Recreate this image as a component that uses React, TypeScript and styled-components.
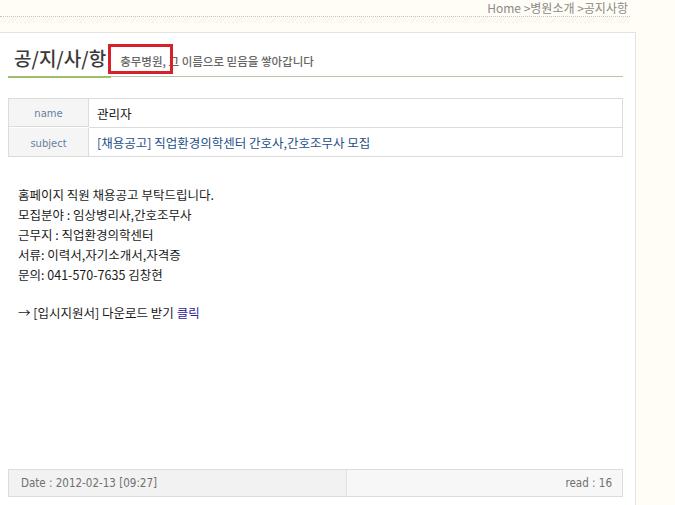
import React from "react";
import styled, { createGlobalStyle } from "styled-components";

const Global = createGlobalStyle`
  html, body { margin: 0; padding: 0; background: #fffdf5; }
  body { font-family: "Noto Sans CJK KR", "DejaVu Sans", sans-serif; }
`;

const Page = styled.div`
  width: 675px;
  height: 505px;
  overflow: hidden;
  background: #fffdf5;
`;

const TopBar = styled.div`
  width: 630px;
  height: 32px;
  display: flex;
  flex-direction: column;
`;

const Breadcrumb = styled.div`
  height: 16px;
  display: flex;
  justify-content: flex-end;
  align-items: center;
  padding-right: 2px;
  font-size: 12px;
  color: #8a8a8a;
  line-height: 12px;
  border-bottom: 1px dotted #c4c4bc;
`;

const Pattern = styled.div`
  height: 6px;
  background: repeating-linear-gradient(135deg, #f4f2ea 0 1px, transparent 1px 3px);
`;

const Panel = styled.div`
  width: 636px;
  height: 473px;
  background: #fff;
  border-top: 1px solid #e3e3e3;
  border-right: 1px solid #e3e3e3;
  box-sizing: border-box;
  padding: 0 12px 0 8px;
  display: flex;
  flex-direction: column;
`;

const TitleRow = styled.div`
  position: relative;
  height: 44px;
  display: flex;
  align-items: flex-end;
  border-bottom: 1px solid #b9c4a9;
  padding-bottom: 7px;
  box-sizing: border-box;
`;

const TitleUnderline = styled.div`
  position: absolute;
  left: 0;
  bottom: -2px;
  width: 103px;
  height: 2px;
  background: #9fbf6a;
`;

const Title = styled.h1`
  margin: 0 0 0 6px;
  font-size: 19px;
  font-weight: 500;
  color: #3a3a3a;
  line-height: 22px;
  letter-spacing: 0;
`;

const Slogan = styled.span`
  position: relative;
  margin-left: 14px;
  font-size: 11.5px;
  font-weight: 500;
  color: #666;
  line-height: 13px;
  padding-bottom: 1px;
`;

const Highlight = styled.span`
  position: absolute;
  left: -12px;
  top: -11px;
  width: 65px;
  height: 30px;
  border: 3px solid #d7202a;
  box-sizing: border-box;
`;

const InfoTable = styled.div`
  margin-top: 21px;
  border: 1px solid #dcdcdc;
  display: grid;
  grid-template-columns: 80px 1fr;
`;

const Label = styled.div<{ $last?: boolean }>`
  height: 28px;
  background: #f5f5f5;
  border-right: 1px solid #dcdcdc;
  border-bottom: ${(p) => (p.$last ? "none" : "1px solid #dcdcdc")};
  display: flex;
  align-items: center;
  justify-content: center;
  font-family: "DejaVu Sans", sans-serif;
  font-size: 10px;
  color: #6580a0;
  padding-top: 2px;
  box-sizing: border-box;
`;

const Value = styled.div<{ $link?: boolean; $last?: boolean }>`
  height: 28px;
  border-bottom: ${(p) => (p.$last ? "none" : "1px solid #dcdcdc")};
  display: flex;
  align-items: center;
  padding-left: 8px;
  font-size: 12.5px;
  color: ${(p) => (p.$link ? "#1d4f88" : "#111")};
`;

const Body = styled.div`
  margin-top: 28px;
  padding-left: 10px;
  font-size: 12.5px;
  line-height: 20px;
  color: #1a1a1a;
  flex: 1;
`;

const Line = styled.div<{ $gap?: boolean }>`
  height: ${(p) => (p.$gap ? "18px" : "20px")};
`;

const Click = styled.span`
  color: #2f2596;
`;

const Footer = styled.div`
  margin-bottom: 8px;
  height: 26px;
  border: 1px solid #dcdcdc;
  display: grid;
  grid-template-columns: 337px 1fr;
  font-family: "DejaVu Sans Condensed", "DejaVu Sans", sans-serif;
  font-size: 11.5px;
  color: #707070;
`;

const FootCell = styled.div<{ $right?: boolean }>`
  display: flex;
  align-items: center;
  justify-content: ${(p) => (p.$right ? "flex-end" : "flex-start")};
  padding: 0 10px 0 12px;
  background: ${(p) => (p.$right ? "#f7f7f7" : "#f2f2f2")};
  border-left: ${(p) => (p.$right ? "1px solid #e2e2e2" : "none")};
`;

export default function App() {
  return (
    <Page>
      <Global />
      <TopBar>
        <Breadcrumb>Home &gt;병원소개 &gt;공지사항</Breadcrumb>
        <Pattern />
      </TopBar>
      <Panel>
        <TitleRow>
          <Title>공/지/사/항</Title>
          <Slogan>
            <Highlight />
            충무병원, 그 이름으로 믿음을 쌓아갑니다
          </Slogan>
          <TitleUnderline />
        </TitleRow>
        <InfoTable>
          <Label>name</Label>
          <Value>관리자</Value>
          <Label $last>subject</Label>
          <Value $link $last>
            [채용공고] 직업환경의학센터 간호사,간호조무사 모집
          </Value>
        </InfoTable>
        <Body>
          <Line>홈페이지 직원 채용공고 부탁드립니다.</Line>
          <Line>모집분야 : 임상병리사,간호조무사</Line>
          <Line>근무지 : 직업환경의학센터</Line>
          <Line>서류: 이력서,자기소개서,자격증</Line>
          <Line>문의: 041-570-7635 김창현</Line>
          <Line $gap />
          <Line>
            → [입시지원서] 다운로드 받기 <Click>클릭</Click>
          </Line>
        </Body>
        <Footer>
          <FootCell>Date : 2012-02-13 [09:27]</FootCell>
          <FootCell $right>read : 16</FootCell>
        </Footer>
      </Panel>
    </Page>
  );
}
